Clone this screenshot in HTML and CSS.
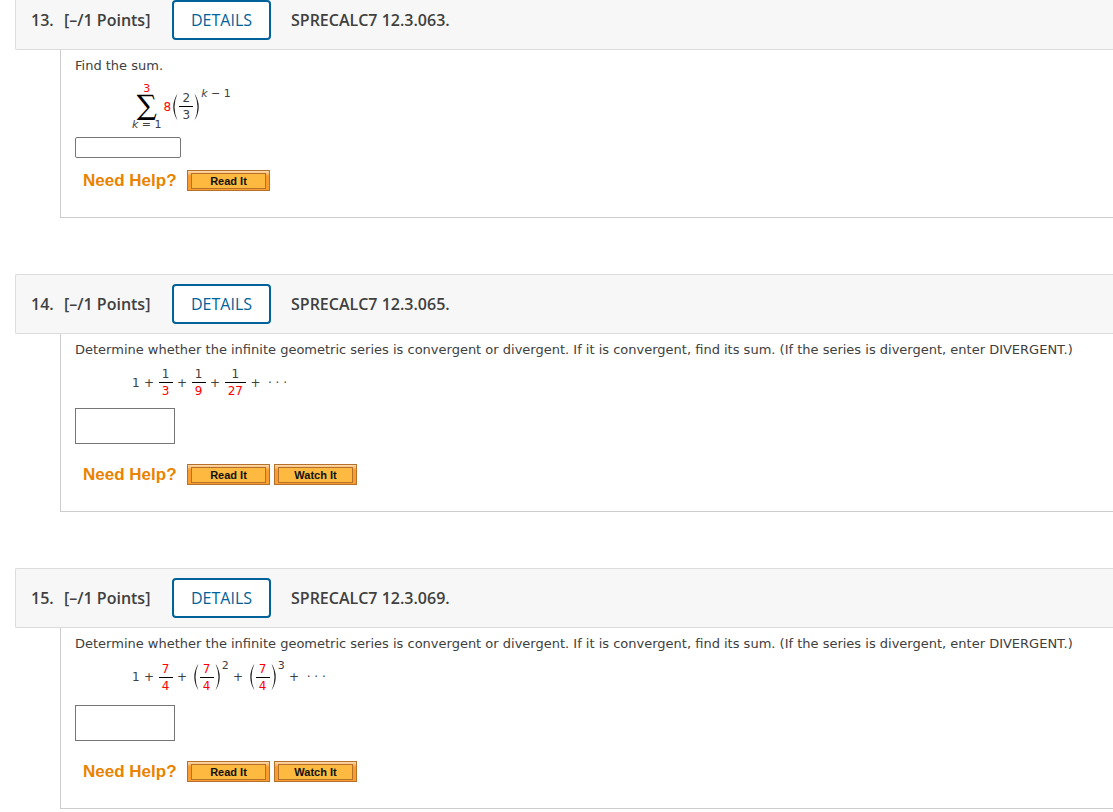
FILE: index.html
```html
<!DOCTYPE html>
<html lang="en">
<head>
    <meta charset="utf-8">
    <title>Homework</title>
    <link rel="stylesheet" href="styles.css">
</head>
<body>
<main id="questions">
    <section class="question">
        <header>
            <span class="number">13.</span>
            <span class="points">[–/1 Points]</span>
            <button class="details">DETAILS</button>
            <strong class="source">SPRECALC7 12.3.063.</strong>
        </header>
        <div class="content">
            <label class="prompt" for="answer13">Find the sum.</label>
            <div class="math math-sum">
                <span class="sum"><span class="red">3</span><span class="sigma">∑</span><span><i>k</i> = 1</span></span>
                <span class="red coef">8</span>
                <svg class="paren" viewBox="0 0 6 28"><path d="M5.5 .5Q-3 14 5.5 27.5Q-.5 14 5.5 .5Z"/></svg>
                <span class="frac"><span>2</span><span>3</span></span>
                <svg class="paren" viewBox="0 0 6 28"><path d="M.5 .5Q9 14 .5 27.5Q6.5 14 .5 .5Z"/></svg>
                <span class="power"><i>k</i> − 1</span>
            </div>
            <input type="text" id="answer13" class="answer-small">
            <div class="help help-near">
                <span class="help-title">Need Help?</span>
                <button><span>Read It</span></button>
            </div>
        </div>
    </section>

    <section class="question">
        <header>
            <span class="number">14.</span>
            <span class="points">[–/1 Points]</span>
            <button class="details">DETAILS</button>
            <strong class="source">SPRECALC7 12.3.065.</strong>
        </header>
        <div class="content">
            <label class="prompt" for="answer14">Determine whether the infinite geometric series is convergent or divergent. If it is convergent, find its sum. (If the series is divergent, enter DIVERGENT.)</label>
            <div class="math">
                <span>1</span>
                <span class="plus">+</span>
                <span class="frac"><span>1</span><span class="red">3</span></span>
                <span class="plus">+</span>
                <span class="frac"><span>1</span><span class="red">9</span></span>
                <span class="plus">+</span>
                <span class="frac"><span>1</span><span class="red">27</span></span>
                <span class="plus">+</span>
                <span class="dots">· · ·</span>
            </div>
            <input type="text" id="answer14" class="answer">
            <div class="help">
                <span class="help-title">Need Help?</span>
                <button><span>Read It</span></button>
                <button><span>Watch It</span></button>
            </div>
        </div>
    </section>

    <section class="question">
        <header>
            <span class="number">15.</span>
            <span class="points">[–/1 Points]</span>
            <button class="details">DETAILS</button>
            <strong class="source">SPRECALC7 12.3.069.</strong>
        </header>
        <div class="content">
            <label class="prompt" for="answer15">Determine whether the infinite geometric series is convergent or divergent. If it is convergent, find its sum. (If the series is divergent, enter DIVERGENT.)</label>
            <div class="math math-powers">
                <span>1</span>
                <span class="plus">+</span>
                <span class="frac red"><span>7</span><span>4</span></span>
                <span class="plus">+</span>
                <svg class="paren" viewBox="0 0 6 28"><path d="M5.5 .5Q-3 14 5.5 27.5Q-.5 14 5.5 .5Z"/></svg>
                <span class="frac red"><span>7</span><span>4</span></span>
                <svg class="paren" viewBox="0 0 6 28"><path d="M.5 .5Q9 14 .5 27.5Q6.5 14 .5 .5Z"/></svg>
                <span class="power">2</span>
                <span class="plus">+</span>
                <svg class="paren" viewBox="0 0 6 28"><path d="M5.5 .5Q-3 14 5.5 27.5Q-.5 14 5.5 .5Z"/></svg>
                <span class="frac red"><span>7</span><span>4</span></span>
                <svg class="paren" viewBox="0 0 6 28"><path d="M.5 .5Q9 14 .5 27.5Q6.5 14 .5 .5Z"/></svg>
                <span class="power">3</span>
                <span class="plus">+</span>
                <span class="dots">· · ·</span>
            </div>
            <input type="text" id="answer15" class="answer">
            <div class="help">
                <span class="help-title">Need Help?</span>
                <button><span>Read It</span></button>
                <button><span>Watch It</span></button>
            </div>
        </div>
    </section>
</main>
</body>
</html>
```
FILE: styles.css
```css
* {
    box-sizing: border-box;
}

body {
    margin: 0;
    background-color: #fff;
    color: #404040;
    font-family: Verdana, "DejaVu Sans", sans-serif;
    font-size: 13px;
    overflow-x: hidden;
}

/* the list is scrolled a little past the first header */
#questions {
    display: flex;
    flex-direction: column;
    gap: 56px;
    margin: -10px 0 0 15px;
}

header {
    display: flex;
    align-items: center;
    height: 60px;
    padding-left: 15px;
    background-color: #f7f7f7;
    border: 1px solid #dcdcdc;
    border-right: none;
    border-radius: 2px 0 0 2px;
    font-family: "Open Sans", sans-serif;
    font-size: 16px;
    font-weight: 600;
}

.number {
    width: 33px;
}

.points {
    width: 108px;
}

.details {
    width: 99px;
    height: 40px;
    margin-right: 20px;
    padding: 0;
    background-color: #fff;
    border: 2px solid #006298;
    border-radius: 4px;
    color: #006298;
    font-family: inherit;
    font-size: 16px;
    cursor: pointer;
}

.source {
    font-weight: 600;
}

.content {
    margin-left: 45px;
    padding: 6px 0 26px 14px;
    border-left: 1px solid #ccc;
    border-bottom: 1px solid #ccc;
}

.prompt {
    display: block;
    line-height: 20px;
}

.math {
    display: flex;
    align-items: center;
    height: 45px;
    margin: 0 0 3px 57px;
    font-size: 12px;
    line-height: 16px;
}

.math-sum {
    height: 61px;
    margin-bottom: 0;
}

.math-powers {
    height: 46px;
    margin-bottom: 5px;
}

.red {
    color: #f00;
}

.sum {
    display: flex;
    flex-direction: column;
    align-items: center;
    line-height: 12px;
    font-size: 11px;
}

.sigma {
    font-family: "DejaVu Math TeX Gyre", "Liberation Serif", serif;
    font-size: 24px;
    line-height: 24px;
    color: #000;
}

.coef {
    margin-left: 2px;
}

.frac {
    display: flex;
    flex-direction: column;
    min-width: 14px;
    padding: 0 3px;
    text-align: center;
}

/* the bar runs past the digits on both sides */
.frac span:first-child {
    margin: 0 -3px;
    border-bottom: 1px solid #000;
}

.plus {
    width: 19px;
    text-align: center;
}

.dots {
    margin-left: 3px;
}

.paren {
    width: 6px;
    height: 28px;
    margin: 0 1px;
    fill: #222;
}

.power {
    align-self: flex-start;
    margin-top: 4px;
    font-size: 11px;
}

.math-sum .power {
    margin-top: 10px;
}

input {
    display: block;
    padding: 2px 4px;
    border: 1px solid #767676;
    background-color: #fff;
    font: inherit;
}

.answer {
    width: 100px;
    height: 36px;
}

.answer-small {
    width: 106px;
    height: 21px;
    border-radius: 2px;
}

.help {
    display: flex;
    align-items: center;
    gap: 4px;
    margin: 20px 0 0 8px;
    font-family: Arial, "Liberation Sans", sans-serif;
}

.help-near {
    margin-top: 12px;
}

.help-title {
    width: 100px;
    color: #e98300;
    font-size: 17px;
    font-weight: bold;
    line-height: 20px;
}

.help button {
    width: 83px;
    height: 21px;
    padding: 2px 3px;
    background: linear-gradient(#fddcb5, #f99d31 5px);
    border: 1px solid #b5712a;
    font-family: inherit;
    font-size: 11px;
    font-weight: bold;
    color: #111;
    cursor: pointer;
}

.help button span {
    display: block;
    background-color: #fdb940;
    border: 1px solid #b5712a;
    line-height: 14px;
}
```
